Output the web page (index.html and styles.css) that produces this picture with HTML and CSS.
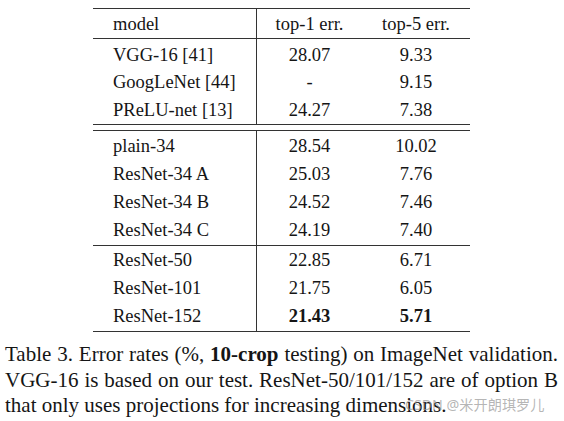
FILE: index.html
```html
<!DOCTYPE html>
<html>
<head>
<meta charset="utf-8">
<link rel="stylesheet" href="styles.css">
</head>
<body>
<div class="page">
  <div class="tbl">
    <div class="row head"><div class="c1">model</div><div class="c">top-1 err.</div><div class="c">top-5 err.</div></div>
    <div class="sec s1">
      <div class="row first"><div class="c1">VGG-16 [41]</div><div class="c">28.07</div><div class="c">9.33</div></div>
      <div class="row"><div class="c1">GoogLeNet [44]</div><div class="c">-</div><div class="c">9.15</div></div>
      <div class="row"><div class="c1">PReLU-net [13]</div><div class="c">24.27</div><div class="c">7.38</div></div>
    </div>
    <div class="gap"></div>
    <div class="sec s2">
      <div class="row first"><div class="c1">plain-34</div><div class="c">28.54</div><div class="c">10.02</div></div>
      <div class="row"><div class="c1">ResNet-34 A</div><div class="c">25.03</div><div class="c">7.76</div></div>
      <div class="row"><div class="c1">ResNet-34 B</div><div class="c">24.52</div><div class="c">7.46</div></div>
      <div class="row last"><div class="c1">ResNet-34 C</div><div class="c">24.19</div><div class="c">7.40</div></div>
    </div>
    <div class="sec s3">
      <div class="row"><div class="c1">ResNet-50</div><div class="c">22.85</div><div class="c">6.71</div></div>
      <div class="row"><div class="c1">ResNet-101</div><div class="c">21.75</div><div class="c">6.05</div></div>
      <div class="row last"><div class="c1">ResNet-152</div><div class="c"><b>21.43</b></div><div class="c"><b>5.71</b></div></div>
    </div>
  </div>
  <p class="cap">
    <span class="ln just">Table 3. Error rates (%, <b>10-crop</b> testing) on ImageNet validation.</span>
    <span class="ln just">VGG-16 is based on our test. ResNet-50/101/152 are of option B</span>
    <span class="ln">that only uses projections for increasing dimensions.</span>
  </p>
  <span class="wm">CSDN @米开朗琪罗儿</span>
</div>
</body>
</html>
```
FILE: styles.css
```css
html, body {
  margin: 0;
  padding: 0;
  background: #fff;
}
.page {
  position: relative;
  width: 564px;
  height: 421px;
  overflow: hidden;
  font-family: "Liberation Serif", "Times New Roman", serif;
  color: #151515;
}
.tbl {
  margin: 8px 0 0 93px;
  width: 377px;
  border-top: 1px solid #333;
  font-size: 18.5px;
}
.row {
  display: grid;
  grid-template-columns: 164px 105px 108px;
}
.row > div {
  line-height: 28px;
  white-space: nowrap;
}
.c1 {
  box-sizing: border-box;
  padding-left: 20px;
  border-right: 1px solid #333;
}
.c {
  text-align: center;
}
.head {
  border-bottom: 1px solid #333;
}
.head > div {
  padding-top: 1px;
}
.sec {
  border-bottom: 1px solid #333;
}
.s1 .row > div {
  line-height: 27.5px;
}
.s1 .first > div {
  padding-top: 2.5px;
}
.gap {
  height: 5px;
}
.s2 {
  border-top: 1px solid #333;
}
.s2 .first > div {
  padding-top: 0.5px;
}
.s2 .last > div {
  padding-bottom: 1.5px;
}
.s3 .last > div {
  padding-bottom: 1px;
}
.cap {
  margin: 10px 0 0 5px;
  width: 553px;
  font-size: 21px;
  line-height: 25.5px;
}
.ln {
  display: block;
  white-space: nowrap;
}
.ln.just {
  text-align: justify;
  text-align-last: justify;
  white-space: normal;
}
.wm {
  position: absolute;
  left: 405px;
  top: 396px;
  font-family: "Noto Sans", "Noto Sans CJK SC", sans-serif;
  font-size: 14.2px;
  line-height: 18px;
  color: rgba(150, 150, 150, 0.7);
  white-space: nowrap;
}
```
